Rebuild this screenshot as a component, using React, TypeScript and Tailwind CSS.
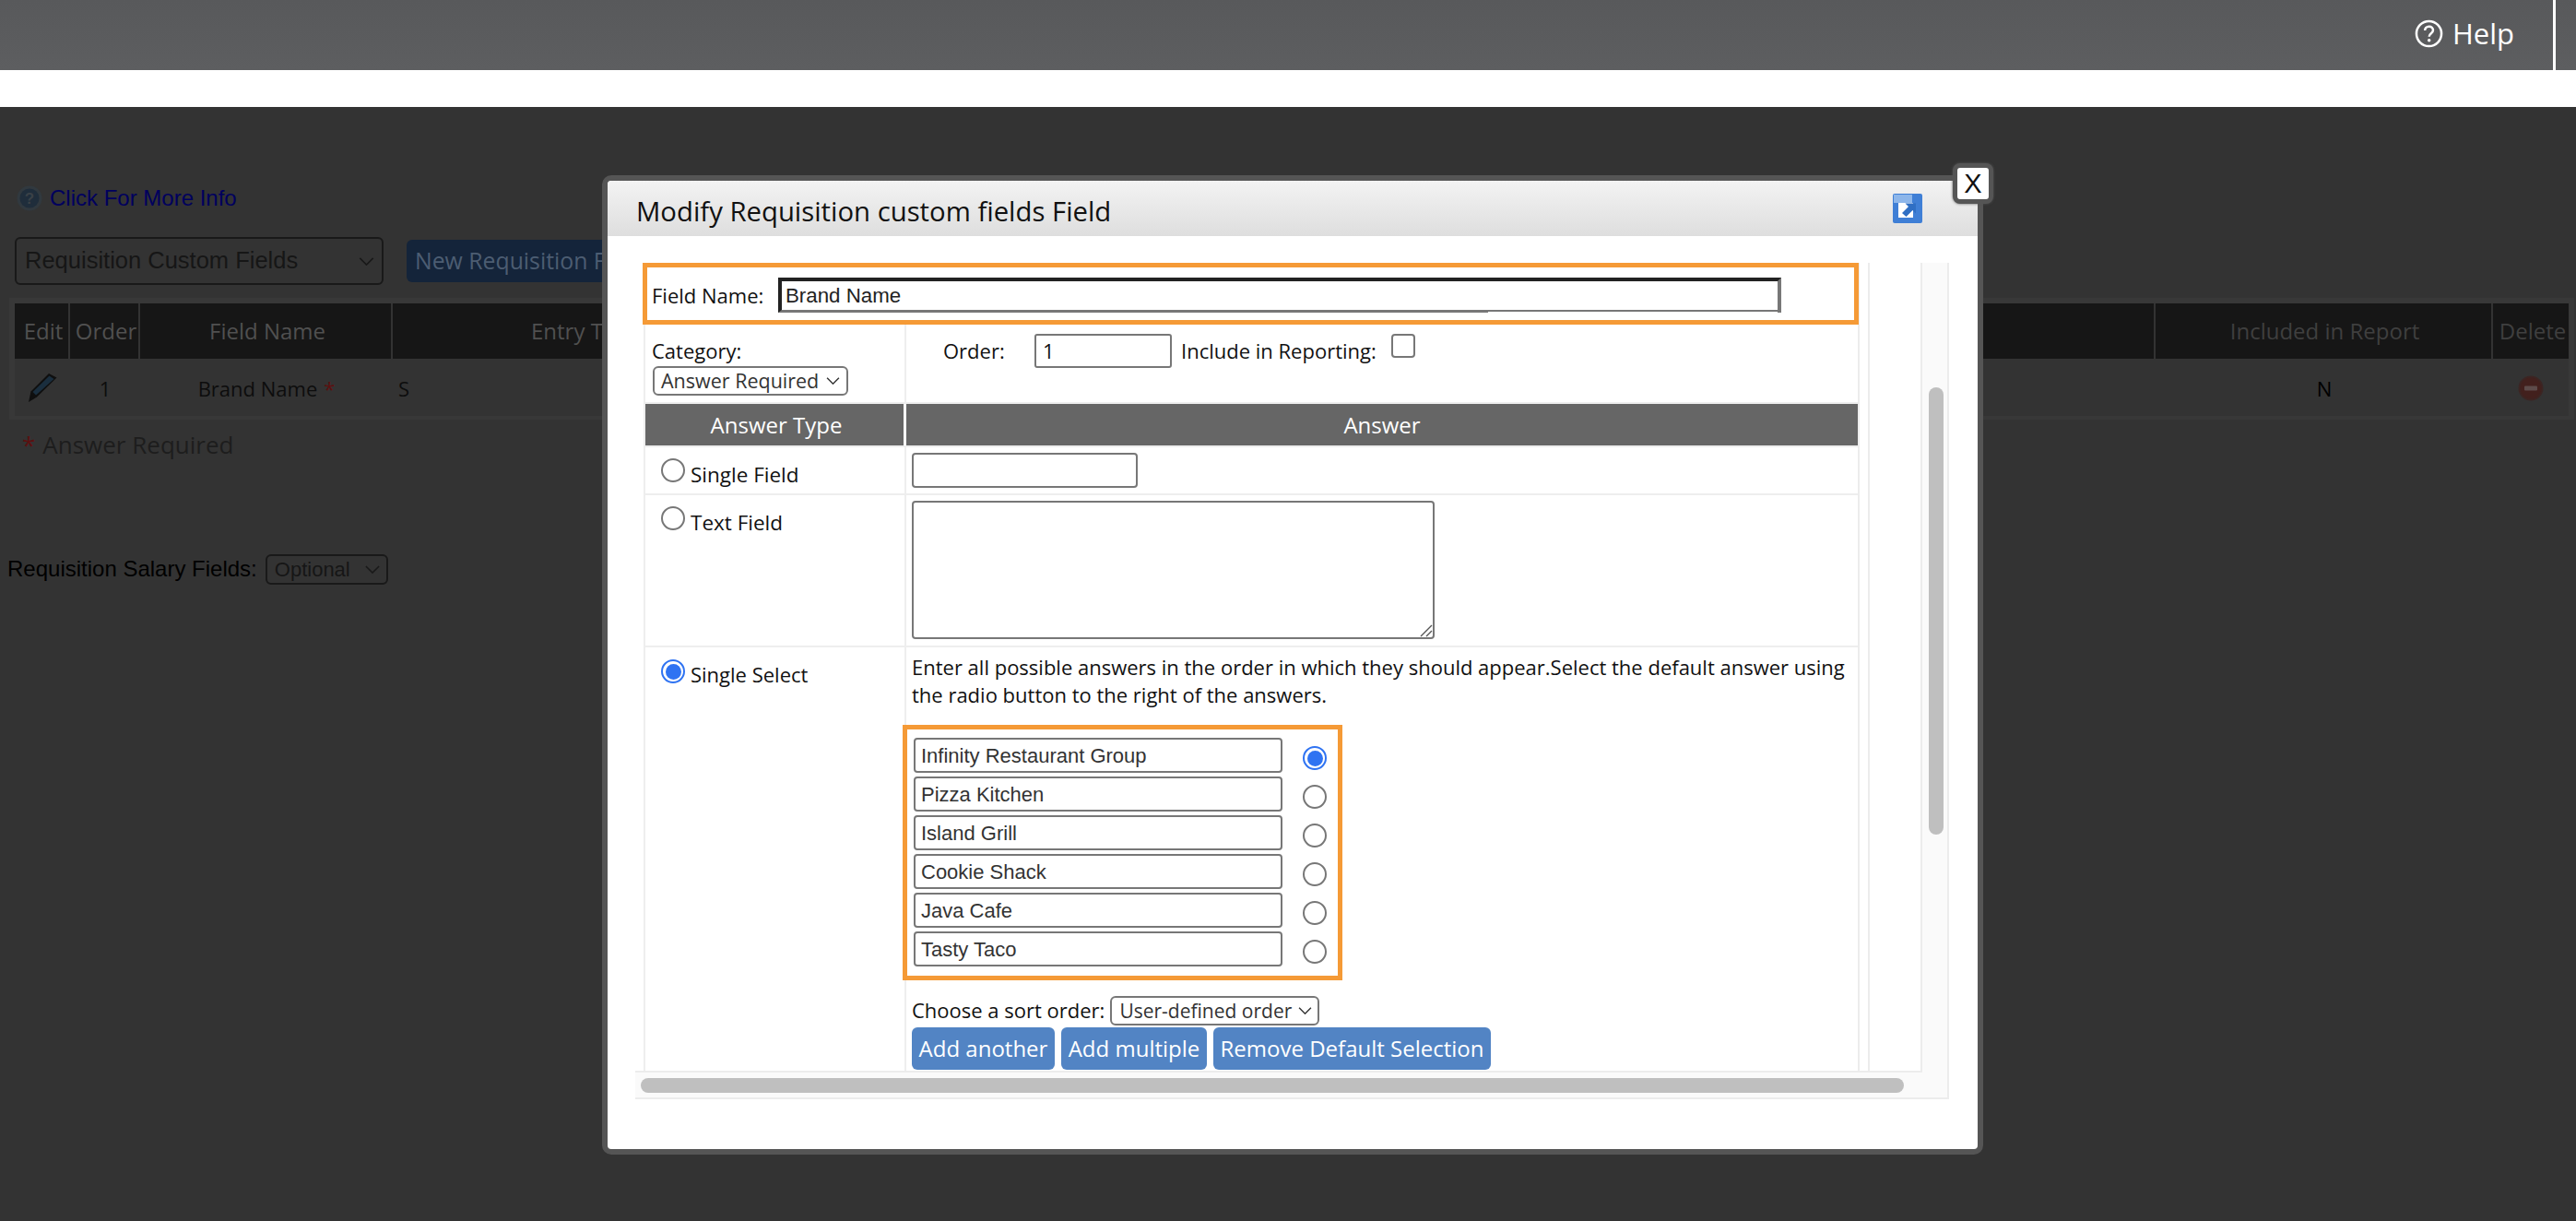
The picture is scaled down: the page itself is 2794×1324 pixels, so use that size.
import React from "react";

const OS = "font-['Open_Sans',sans-serif]";
const LS = "font-['Liberation_Sans',Arial,sans-serif]";

function Chevron({ className }: { className: string }) {
  return (
    <svg viewBox="0 0 18 10" fill="none" className={className}>
      <path d="M1 1l8 8 8-8" stroke="currentColor" strokeWidth="1.8" />
    </svg>
  );
}

function Radio({ checked, className = "" }: { checked?: boolean; className?: string }) {
  return (
    <span
      className={`flex h-[26px] w-[26px] shrink-0 items-center justify-center rounded-full border-2 bg-white ${
        checked ? "border-[#2f73f2]" : "border-[#777777]"
      } ${className}`}
    >
      {checked && <span className="h-[17px] w-[17px] rounded-full bg-[#2f73f2]" />}
    </span>
  );
}

function Sel({ label, className, textClass, chevClass }: { label: string; className: string; textClass: string; chevClass: string }) {
  return (
    <div className={`flex items-center justify-between rounded-[6px] border-2 ${className}`}>
      <span className={`whitespace-nowrap ${textClass}`}>{label}</span>
      <Chevron className={chevClass} />
    </div>
  );
}

const answers = ["Infinity Restaurant Group", "Pizza Kitchen", "Island Grill", "Cookie Shack", "Java Cafe", "Tasty Taco"];

function Page() {
  return (
    <div className="flex min-h-0 flex-1 flex-col bg-[#333333] pt-[85px]">
      <div className="flex h-[28px] items-center gap-[8px] pl-[18px]">
        <svg viewBox="0 0 28 28" className="h-[28px] w-[28px]">
          <circle cx="14" cy="14" r="13.5" fill="#31393f" />
          <circle cx="14" cy="14" r="10.5" fill="#1f2d3b" />
          <text x="14" y="20" textAnchor="middle" fontSize="17" fontWeight="700" fill="#3a4147" fontFamily="Liberation Sans">?</text>
        </svg>
        <span className={`${LS} text-[24px] leading-[28px] text-[#00005e]`}>Click For More Info</span>
      </div>
      <div className="mt-[28px] flex items-center pl-[16px]">
        <Sel
          label="Requisition Custom Fields"
          className="h-[52px] w-[400px] border-[#191919] pl-[9px] pr-[8px]"
          textClass={`${LS} pb-[2px] text-[25.5px] text-[#161616]`}
          chevClass="h-[9px] w-[17px] text-[#191919]"
        />
        <div className={`${OS} ml-[25px] flex h-[46px] w-[300px] items-center whitespace-nowrap rounded-[6px] bg-[#14243a] pl-[9px] text-[24.8px] text-[#4c5d72]`}>
          New Requisition Field
        </div>
      </div>
      <div className="ml-[10px] mr-[2px] mt-[14px] border-[6px] border-b-[4px] border-[#383838]">
        <div className={`${OS} flex h-[60px] bg-[#161616] text-[24px] text-[#505050]`}>
          <div className="flex w-[60px] items-center justify-center border-r-2 border-[#333333] pl-[4px]">Edit</div>
          <div className="flex w-[76px] items-center justify-center border-r-2 border-[#333333] pl-[4px]">Order</div>
          <div className="flex w-[274px] items-center justify-center border-r-2 border-[#333333] pl-[4px]">Field Name</div>
          <div className="flex flex-1 items-center border-r-2 border-[#333333] pl-[150px]">Entry Type</div>
          <div className="flex w-[366px] items-center justify-center border-r-2 border-[#333333] pl-[3px] text-[#3f3f3f]">Included in Report</div>
          <div className="flex w-[82px] items-center justify-center pl-[4px] text-[#3f3f3f]">Delete</div>
        </div>
        <div className={`${OS} flex h-[62px] items-center pt-[2px] text-[22px] text-[#0d0d0d]`}>
          <div className="flex w-[60px] items-center justify-center">
            <svg viewBox="0 0 32 32" className="h-[32px] w-[32px]">
              <path d="M23 0l8.5 4.5L10 25.5 1 31l2.5-11.5z" fill="#0f0f0f" />
              <path d="M23.5 2.5l5 3.5L9 23.5 5.5 20z" fill="#1a2e3e" />
            </svg>
          </div>
          <div className="flex w-[76px] justify-center">1</div>
          <div className="flex w-[274px] justify-center gap-[7px]">
            <span>Brand Name</span>
            <span className="text-[#5c1010]">*</span>
          </div>
          <div className="flex-1 pl-[6px]">S</div>
          <div className="flex w-[366px] justify-center text-black">N</div>
          <div className="flex w-[82px] justify-center">
            <svg viewBox="0 0 28 28" className="h-[28px] w-[28px]">
              <circle cx="14" cy="14" r="13.5" fill="#3c2523" />
              <circle cx="14" cy="14" r="11.5" fill="#42201d" />
              <rect x="7" y="11.5" width="14" height="5" rx="1" fill="#5d4b4a" />
            </svg>
          </div>
        </div>
      </div>
      <div className={`${OS} mt-[8px] flex items-center gap-[8px] pl-[24px] text-[26px] leading-[38px] text-[#1d1d1d]`}>
        <span className="text-[#5c1010]">*</span>
        <span>Answer Required</span>
      </div>
      <div className="mt-[98px] flex items-center pl-[8px]">
        <span className={`${LS} text-[24px] text-black`}>Requisition Salary Fields:</span>
        <Sel
          label="Optional"
          className="ml-[9px] h-[33px] w-[133px] border-[#191919] pl-[8px] pr-[7px]"
          textClass={`${LS} text-[22px] text-[#161616]`}
          chevClass="h-[9px] w-[16px] text-[#191919]"
        />
      </div>
    </div>
  );
}

function Modal() {
  return (
    <div className="absolute left-[653px] top-[190px] flex h-[1062px] w-[1498px] flex-col rounded-[10px] border-[6px] border-[#555555] bg-white">
      <button className="absolute right-[-17px] top-[-19px] z-10 flex h-[44px] w-[44px] items-center justify-center rounded-[8px] border-[5px] border-[#555555] bg-white shadow-[0_0_3px_#555555]">
        <span className={`${LS} text-[29px] leading-none text-[#111111]`}>X</span>
      </button>
      <div className="flex h-[60px] shrink-0 items-center justify-between rounded-t-[4px] bg-gradient-to-b from-[#f3f3f3] to-[#dedede] pl-[31px] pr-[60px]">
        <span className={`${OS} mt-[5px] text-[29.3px] leading-[40px] text-[#111111]`}>Modify Requisition custom fields Field</span>
        <svg viewBox="0 0 32 32" className="h-[32px] w-[32px]">
          <rect width="32" height="32" rx="2" fill="#3f7fd6" />
          <rect x="1" y="1" width="20" height="9" fill="#8db6ea" />
          <path d="M6 10h16v16H6z" fill="#ffffff" />
          <path d="M10 21l7-7-3.5-3.5H25v11l-3.5-3.5-7 7z" fill="#2f6fc4" />
        </svg>
      </div>
      <div className="ml-[30px] mt-[29px] flex h-[907px] w-[1425px] flex-col">
        <div className="flex min-h-0 flex-1">
          <div className="flex w-[1396px] shrink-0 border-b-2 border-[#ececec]">
            <div className="flex w-[1328px] shrink-0 flex-col border-r-2 border-[#ececec] pl-[9px]">
              <div className={`${OS} ml-[-1px] flex h-[67px] w-[1319px] shrink-0 items-center border-[5px] border-[#f59a36] pl-[5px] pt-[3px] text-[22px] text-[#111111]`}>
                <span className="w-[120px] whitespace-nowrap">Field Name:</span>
                <div className="relative ml-[17px] flex h-[38px] w-[1088px] items-center border-b-[3px] border-l-[4px] border-r-[4px] border-t-[4px] border-b-[#777777] border-l-[#222222] border-r-[#777777] border-t-[#222222] pl-[4px]">
                  <span className={`${LS} text-[22.3px] text-[#222222]`}>Brand Name</span>
                  <span className="absolute bottom-[-3px] right-0 h-[1px] w-[314px] bg-white" />
                </div>
              </div>
              <div className={`${OS} flex h-[84px] shrink-0 border-l-2 border-[#eeeeee] text-[22px] text-[#111111]`}>
                <div className="flex w-[283px] shrink-0 flex-col border-r-2 border-[#eeeeee] pl-[7px] pt-[12px]">
                  <span className="leading-[32px]">Category:</span>
                  <Sel
                    label="Answer Required"
                    className="ml-[1px] mt-[1px] h-[32px] w-[212px] border-[#777777] pl-[7px] pr-[7px]"
                    textClass="text-[21.5px] leading-[28px] text-[#333333]"
                    chevClass="h-[8px] w-[15px] text-[#333333]"
                  />
                </div>
                <div className="flex flex-1 items-start pl-[40px] pt-[10px]">
                  <span className="w-[66px] leading-[36px]">Order:</span>
                  <div className="ml-[33px] flex h-[37px] w-[149px] items-center rounded-[3px] border-2 border-[#777777] pl-[7px] text-[#111111]">1</div>
                  <span className="ml-[10px] w-[211px] whitespace-nowrap leading-[36px]">Include in Reporting:</span>
                  <span className="ml-[17px] h-[26px] w-[26px] rounded-[4px] border-2 border-[#777777]" />
                </div>
              </div>
              <div className={`${OS} flex h-[49px] shrink-0 border-b-[2px] border-l-2 border-t-2 border-[#eeeeee] text-[24px] text-white`}>
                <div className="flex w-[283px] shrink-0 items-center justify-center border-r-[3px] border-white bg-[#666666] pl-[4px]">Answer Type</div>
                <div className="flex flex-1 items-center justify-center bg-[#666666]">Answer</div>
              </div>
              <div className={`${OS} flex h-[52px] shrink-0 border-b-2 border-l-2 border-[#eeeeee] text-[22.5px] text-[#111111]`}>
                <div className="flex w-[283px] shrink-0 items-start border-r-2 border-[#eeeeee] pl-[17px] pt-[12px]">
                  <Radio />
                  <span className="ml-[6px] mt-[2px] leading-[32px]">Single Field</span>
                </div>
                <div className="pl-[6px] pt-[6px]">
                  <div className="h-[38px] w-[245px] rounded-[4px] border-2 border-[#777777]" />
                </div>
              </div>
              <div className={`${OS} flex h-[165px] shrink-0 border-b-2 border-l-2 border-[#eeeeee] text-[22.5px] text-[#111111]`}>
                <div className="flex w-[283px] shrink-0 items-start border-r-2 border-[#eeeeee] pl-[17px] pt-[12px]">
                  <Radio />
                  <span className="ml-[6px] mt-[2px] leading-[32px]">Text Field</span>
                </div>
                <div className="pl-[6px] pt-[6px]">
                  <div className="flex h-[150px] w-[567px] items-end justify-end rounded-[4px] border-2 border-[#777777]">
                    <svg viewBox="0 0 14 14" className="h-[14px] w-[14px]">
                      <path d="M1 13L13 1M7 13l6-6" stroke="#555555" strokeWidth="1.4" />
                    </svg>
                  </div>
                </div>
              </div>
              <div className={`${OS} flex min-h-0 flex-1 border-l-2 border-[#eeeeee] text-[22px] text-[#111111]`}>
                <div className="flex w-[283px] shrink-0 items-start border-r-2 border-[#eeeeee] pl-[17px] pt-[13px]">
                  <Radio checked />
                  <span className="ml-[6px] leading-[32px]">Single Select</span>
                </div>
                <div className="flex flex-col">
                  <p className="w-[1030px] pl-[6px] pt-[6px] leading-[30px]">
                    Enter all possible answers in the order in which they should appear.Select the default answer using the radio button to the right of the answers.
                  </p>
                  <div className="ml-[-4px] mt-[18px] flex h-[277px] w-[477px] flex-col border-[5px] border-[#f59a36] pl-[7px] pt-[9px]">
                    {answers.map((a, i) => (
                      <div key={a} className="flex h-[42px] shrink-0 items-start">
                        <div className={`${LS} flex h-[38px] w-[400px] items-center rounded-[4px] border-2 border-[#777777] pl-[6px] text-[22px] text-[#333333]`}>{a}</div>
                        <Radio className="ml-[22px] mt-[9px]" checked={i === 0} />
                      </div>
                    ))}
                  </div>
                  <div className="mt-[16px] flex items-center pl-[6px]">
                    <span className="whitespace-nowrap">Choose a sort order:</span>
                    <Sel
                      label="User-defined order"
                      className="ml-[6px] h-[32px] w-[227px] border-[#777777] pl-[8px] pr-[6px]"
                      textClass="text-[21px] leading-[28px] text-[#333333]"
                      chevClass="h-[8px] w-[15px] text-[#333333]"
                    />
                  </div>
                  <div className="mt-[2px] flex gap-[7px] pl-[6px] text-[24px] text-white">
                    <button className="h-[46px] w-[155px] rounded-[6px] bg-[#5284c4] text-center">Add another</button>
                    <button className="h-[46px] w-[158px] rounded-[6px] bg-[#5284c4] text-center">Add multiple</button>
                    <button className="h-[46px] w-[301px] rounded-[6px] bg-[#5284c4] text-center">Remove Default Selection</button>
                  </div>
                </div>
              </div>
            </div>
            <div className="w-[11px] shrink-0 border-r-2 border-[#ececec]" />
            <div className="flex-1 border-r-2 border-[#ececec]" />
          </div>
          <div className="flex-1 border-r-2 border-[#ececec] bg-[#fafafa] pl-[7px] pt-[135px]">
            <div className="h-[485px] w-[16px] rounded-full bg-[#bfbfbf]" />
          </div>
        </div>
        <div className="flex h-[29px] shrink-0 items-center border-b-2 border-r-2 border-[#ececec] bg-[#fafafa] pl-[6px]">
          <div className="h-[16px] w-[1370px] rounded-full bg-[#bfbfbf]" />
        </div>
      </div>
    </div>
  );
}

export default function App() {
  return (
    <div className={`${OS} relative flex h-[1324px] w-[2794px] flex-col overflow-hidden bg-[#333333]`}>
      <header className="flex h-[76px] shrink-0 items-center justify-end bg-gradient-to-b from-[#58595b] to-[#5d5e60]">
        <div className="flex items-center pb-[4px]">
          <svg viewBox="0 0 32 32" className="h-[31px] w-[31px]" fill="none">
            <circle cx="16" cy="16" r="14" stroke="#ffffff" strokeWidth="2.6" />
            <path d="M11.5 12.5c0-2.8 2-4.5 4.6-4.5 2.7 0 4.5 1.7 4.5 4 0 3.8-4.4 3.6-4.4 7.4" stroke="#ffffff" strokeWidth="2.6" />
            <circle cx="16.2" cy="23.6" r="1.8" fill="#ffffff" />
          </svg>
          <span className="ml-[10px] text-[31px] leading-none text-white">Help</span>
        </div>
        <div className="ml-[42px] mr-[22px] h-full w-[3px] bg-white" />
      </header>
      <div className="h-[40px] shrink-0 bg-white" />
      <Page />
      <Modal />
    </div>
  );
}
